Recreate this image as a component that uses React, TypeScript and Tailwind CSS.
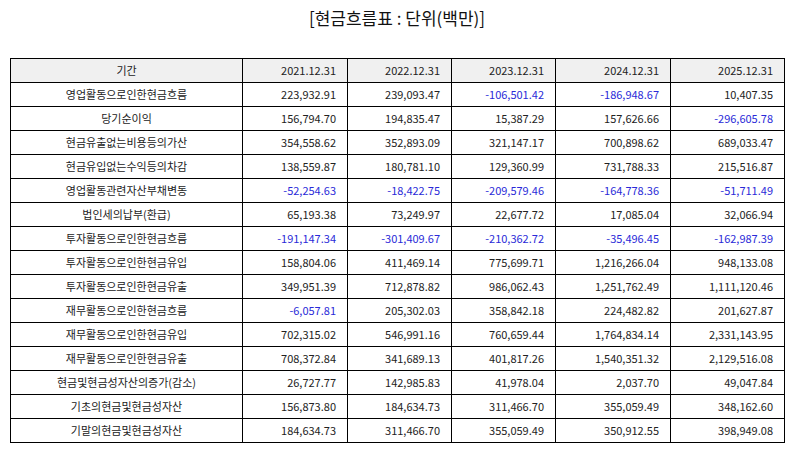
import React from 'react';

const years = ['2021.12.31', '2022.12.31', '2023.12.31', '2024.12.31', '2025.12.31'];

const rows: [string, string[]][] = [
  ['영업활동으로인한현금흐름', ['223,932.91', '239,093.47', '-106,501.42', '-186,948.67', '10,407.35']],
  ['당기순이익', ['156,794.70', '194,835.47', '15,387.29', '157,626.66', '-296,605.78']],
  ['현금유출없는비용등의가산', ['354,558.62', '352,893.09', '321,147.17', '700,898.62', '689,033.47']],
  ['현금유입없는수익등의차감', ['138,559.87', '180,781.10', '129,360.99', '731,788.33', '215,516.87']],
  ['영업활동관련자산부채변동', ['-52,254.63', '-18,422.75', '-209,579.46', '-164,778.36', '-51,711.49']],
  ['법인세의납부(환급)', ['65,193.38', '73,249.97', '22,677.72', '17,085.04', '32,066.94']],
  ['투자활동으로인한현금흐름', ['-191,147.34', '-301,409.67', '-210,362.72', '-35,496.45', '-162,987.39']],
  ['투자활동으로인한현금유입', ['158,804.06', '411,469.14', '775,699.71', '1,216,266.04', '948,133.08']],
  ['투자활동으로인한현금유출', ['349,951.39', '712,878.82', '986,062.43', '1,251,762.49', '1,111,120.46']],
  ['재무활동으로인한현금흐름', ['-6,057.81', '205,302.03', '358,842.18', '224,482.82', '201,627.87']],
  ['재무활동으로인한현금유입', ['702,315.02', '546,991.16', '760,659.44', '1,764,834.14', '2,331,143.95']],
  ['재무활동으로인한현금유출', ['708,372.84', '341,689.13', '401,817.26', '1,540,351.32', '2,129,516.08']],
  ['현금및현금성자산의증가(감소)', ['26,727.77', '142,985.83', '41,978.04', '2,037.70', '49,047.84']],
  ['기초의현금및현금성자산', ['156,873.80', '184,634.73', '311,466.70', '355,059.49', '348,162.60']],
  ['기말의현금및현금성자산', ['184,634.73', '311,466.70', '355,059.49', '350,912.55', '398,949.08']],
];

const colWidths = ['w-[232px]', 'w-[105px]', 'w-[104px]', 'w-[104px]', 'w-[115px]', 'w-[114px]'];

export default function App() {
  return (
    <div
      className="w-[794px] h-[452px] bg-white px-[10px] pt-[7px] text-[#222]"
      style={{ fontFamily: '"Noto Sans CJK KR", "Noto Sans", sans-serif' }}
    >
      <h1 className="text-center text-[17px] leading-[22px] font-normal text-[#111]">[현금흐름표 : 단위(백만)]</h1>

      <table className="mt-[29px] w-[775px] table-fixed border-collapse border border-black text-[11px]">
        <colgroup>
          {colWidths.map((w, i) => (
            <col key={i} className={w} />
          ))}
        </colgroup>
        <thead>
          <tr className="h-[24px] bg-[#f0f0f0]">
            <th className="border border-black text-center font-normal">기간</th>
            {years.map((y) => (
              <th key={y} className="border border-black pr-[11px] text-right font-normal">
                {y}
              </th>
            ))}
          </tr>
        </thead>
        <tbody>
          {rows.map(([label, vals]) => (
            <tr key={label} className="h-[24px]">
              <td className="border border-black text-center">{label}</td>
              {vals.map((v, i) => (
                <td
                  key={i}
                  className={`border border-black pr-[11px] text-right ${v.startsWith('-') ? 'text-[#2a2ad8]' : ''}`}
                >
                  {v}
                </td>
              ))}
            </tr>
          ))}
        </tbody>
      </table>
    </div>
  );
}
